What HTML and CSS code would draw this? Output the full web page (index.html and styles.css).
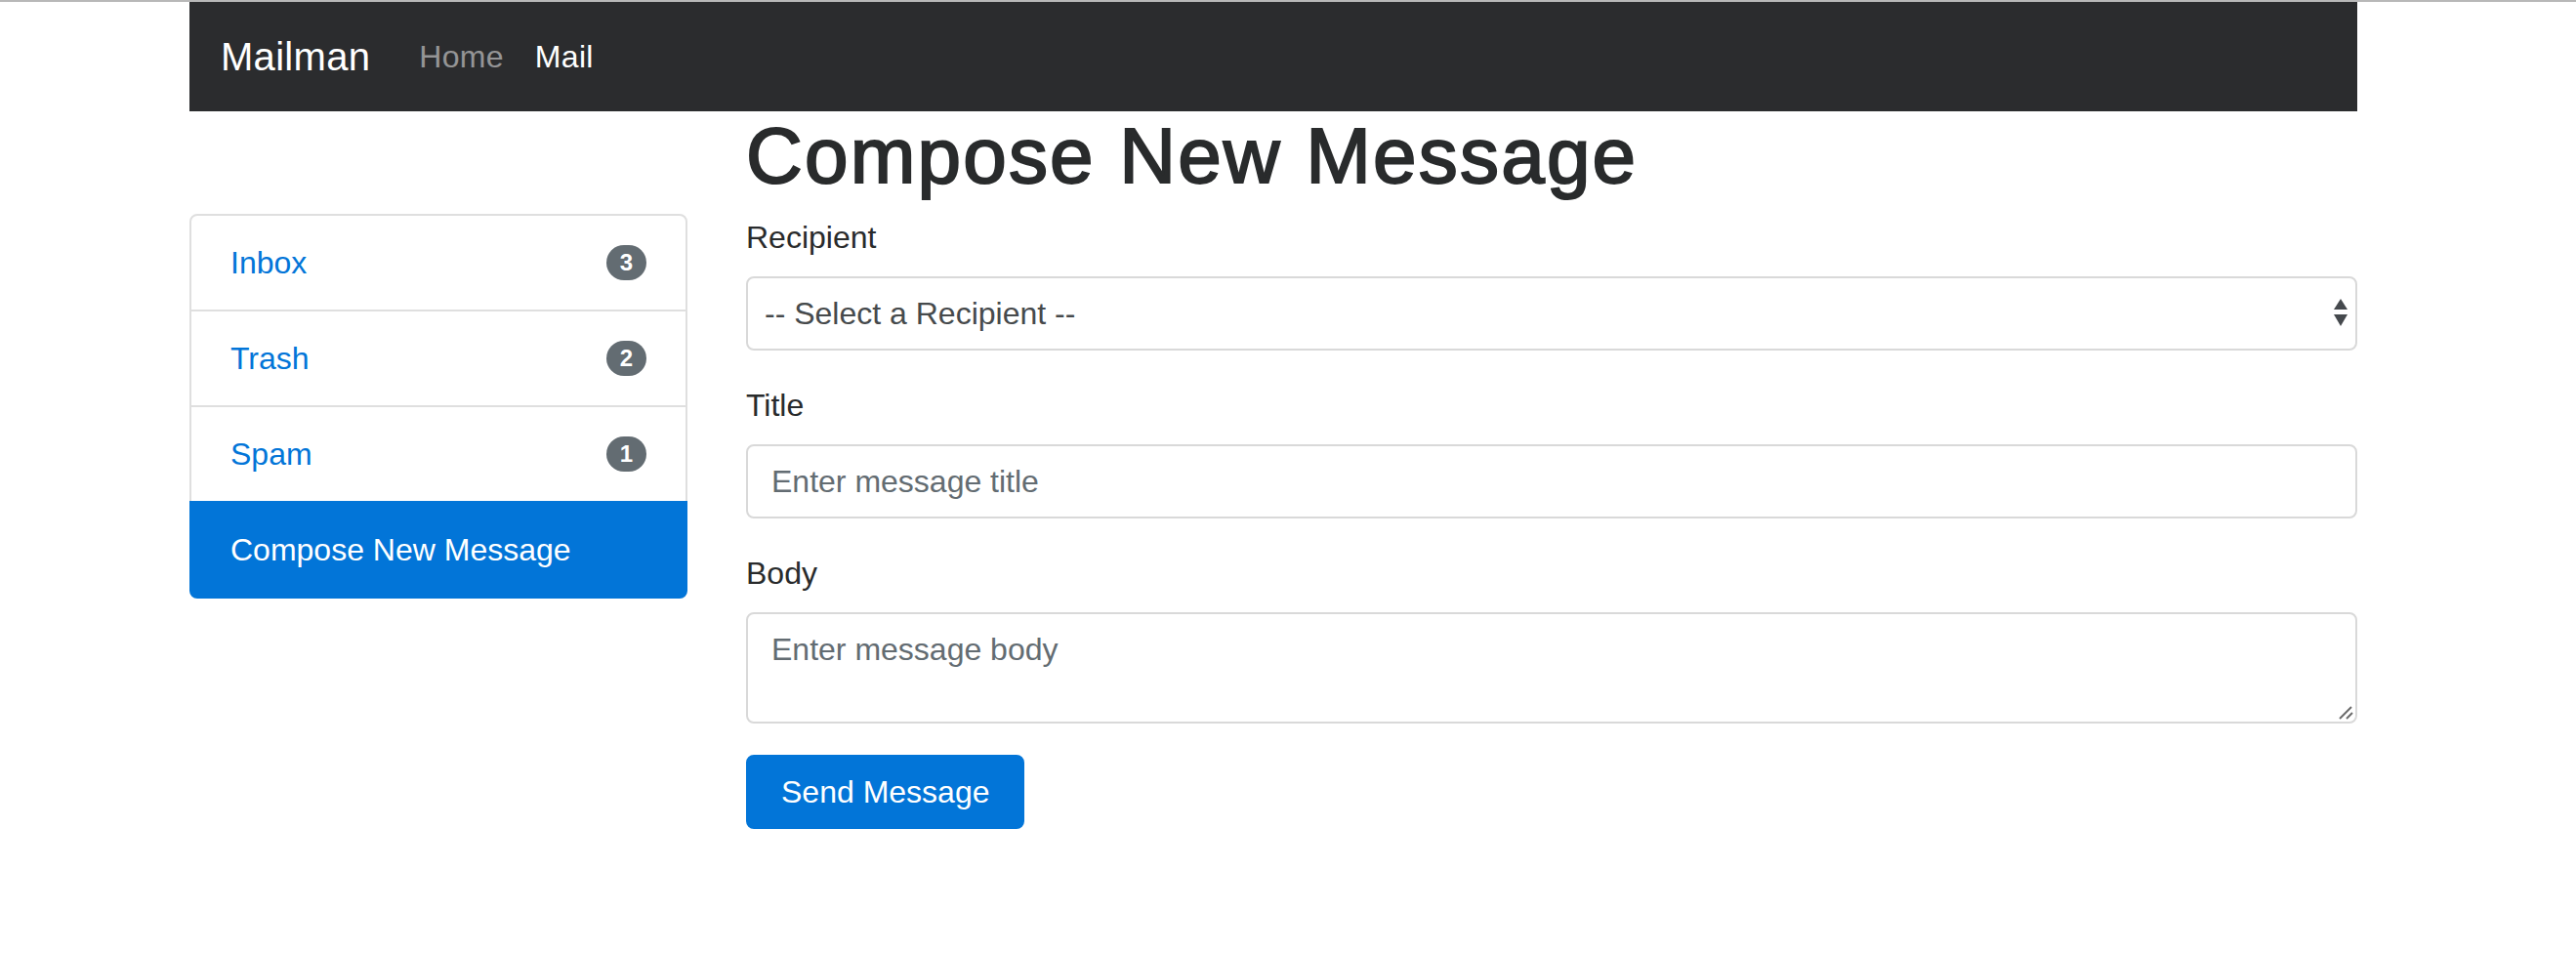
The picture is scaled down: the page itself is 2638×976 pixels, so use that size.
FILE: index.html
```html
<!DOCTYPE html>
<html lang="en">
<head>
<meta charset="utf-8">
<title>Mailman - Compose New Message</title>
<link rel="stylesheet" href="styles.css">
</head>
<body>
<div class="topline"></div>
<div class="container">
  <nav class="navbar">
    <a class="brand" href="#">Mailman</a>
    <ul class="nav">
      <li><a class="nav-link" href="#">Home</a></li>
      <li><a class="nav-link active" href="#">Mail</a></li>
    </ul>
  </nav>
  <div class="layout">
    <h1 class="page-title">Compose New Message</h1>
    <aside class="sidebar">
      <div class="list-group">
        <a class="list-item" href="#"><span>Inbox</span><span class="badge">3</span></a>
        <a class="list-item" href="#"><span>Trash</span><span class="badge">2</span></a>
        <a class="list-item" href="#"><span>Spam</span><span class="badge">1</span></a>
        <a class="list-item active" href="#"><span>Compose New Message</span></a>
      </div>
    </aside>
    <form class="compose">
      <div class="form-group">
        <label class="label" for="recipient">Recipient</label>
        <div class="field-wrap">
          <select class="control select" id="recipient">
            <option>-- Select a Recipient --</option>
          </select>
          <svg class="select-arrows" width="16" height="30" viewBox="0 0 16 30" aria-hidden="true">
            <polygon points="8,0 15,11 1,11" fill="#45494d"/>
            <polygon points="1,16 15,16 8,28" fill="#45494d"/>
          </svg>
        </div>
      </div>
      <div class="form-group">
        <label class="label" for="title">Title</label>
        <input class="control" id="title" type="text" placeholder="Enter message title">
      </div>
      <div class="form-group">
        <label class="label" for="body">Body</label>
        <div class="field-wrap">
          <textarea class="control textarea" id="body" placeholder="Enter message body"></textarea>
          <svg class="resize-grip" width="16" height="16" viewBox="0 0 16 16" aria-hidden="true">
            <line x1="1" y1="14" x2="13" y2="2" stroke="#6a6a6a" stroke-width="2"/>
            <line x1="8" y1="14" x2="14" y2="8" stroke="#6a6a6a" stroke-width="2"/>
          </svg>
        </div>
      </div>
      <button class="btn" type="button">Send Message</button>
    </form>
  </div>
</div>
</body>
</html>
```

FILE: styles.css
```css
* {
  box-sizing: border-box;
}

html, body {
  margin: 0;
  padding: 0;
  background: #ffffff;
}

body {
  font-family: "Liberation Sans", Arial, Helvetica, sans-serif;
  font-size: 32px;
  line-height: 48px;
  color: #292b2c;
  padding-right: 30px;
}

.topline {
  height: 2px;
  background: #b8b8b8;
  margin-right: -30px;
}

.container {
  width: 2220px;
  margin: 0 auto;
}

/* Navbar */
.navbar {
  display: flex;
  align-items: center;
  height: 112px;
  padding: 16px 32px;
  background: #2b2c2e;
}

.brand {
  font-size: 40px;
  line-height: 60px;
  padding: 8px 0;
  margin-right: 34px;
  letter-spacing: 0.3px;
  color: #ffffff;
  text-decoration: none;
}

.nav {
  display: flex;
  list-style: none;
  margin: 0;
  padding: 0;
}

.nav-link {
  display: block;
  padding: 16px;
  line-height: 48px;
  letter-spacing: 0.3px;
  color: rgba(255, 255, 255, 0.5);
  text-decoration: none;
}

.nav-link.active {
  color: #ffffff;
}

/* Layout */
.layout {
  display: grid;
  grid-template-columns: 510px 1650px;
  column-gap: 60px;
  align-items: start;
}

.page-title {
  grid-column: 2;
  grid-row: 1;
  margin: 0 0 17px;
  padding-top: 3px;
  font-size: 80px;
  line-height: 85px;
  font-weight: 500;
  letter-spacing: 2.2px;
  -webkit-text-stroke: 2px #292b2c;
  color: #292b2c;
}

.sidebar {
  grid-column: 1;
  grid-row: 2;
}

.list-group {
  display: flex;
  flex-direction: column;
}

.list-item {
  display: flex;
  align-items: center;
  justify-content: space-between;
  padding: 24px 40px;
  line-height: 48px;
  margin-bottom: -2px;
  border: 2px solid #dfdfdf;
  background: #ffffff;
  color: #0275d8;
  text-decoration: none;
}

.list-item:first-child {
  border-top-left-radius: 8px;
  border-top-right-radius: 8px;
}

.list-item:last-child {
  margin-bottom: 0;
  border-bottom-left-radius: 8px;
  border-bottom-right-radius: 8px;
}

.list-item.active {
  background: #0275d8;
  border-color: #0275d8;
  color: #ffffff;
}

.badge {
  display: inline-block;
  padding: 6px 14px;
  font-size: 24px;
  line-height: 24px;
  font-weight: bold;
  color: #ffffff;
  background: #636c72;
  border-radius: 320px;
}

/* Form */
.compose {
  grid-column: 2;
  grid-row: 2;
}

.form-group {
  margin-bottom: 32px;
}

.label {
  display: inline-block;
  margin-bottom: 16px;
  line-height: 48px;
}

.control {
  display: block;
  width: 100%;
  margin: 0;
  padding: 16px 24px;
  font-family: inherit;
  font-size: 32px;
  line-height: 40px;
  color: #464a4c;
  background: #ffffff;
  border: 2px solid #d9d9d9;
  border-radius: 8px;
  outline: none;
}

.control::placeholder {
  color: #636c72;
  opacity: 1;
}

.field-wrap {
  position: relative;
}

.select {
  -webkit-appearance: none;
  appearance: none;
  height: 76px;
  padding: 0 60px 0 17px;
}

.select-arrows {
  position: absolute;
  right: 9px;
  top: 23px;
  pointer-events: none;
}

.textarea {
  height: 114px;
  resize: none;
}

.resize-grip {
  position: absolute;
  right: 3px;
  bottom: 3px;
  pointer-events: none;
}

.btn {
  display: inline-block;
  height: 76px;
  padding: 0 34px;
  font-family: inherit;
  font-size: 32px;
  line-height: 40px;
  color: #ffffff;
  background: #0275d8;
  border: 2px solid #0275d8;
  border-radius: 8px;
  cursor: pointer;
}
```
